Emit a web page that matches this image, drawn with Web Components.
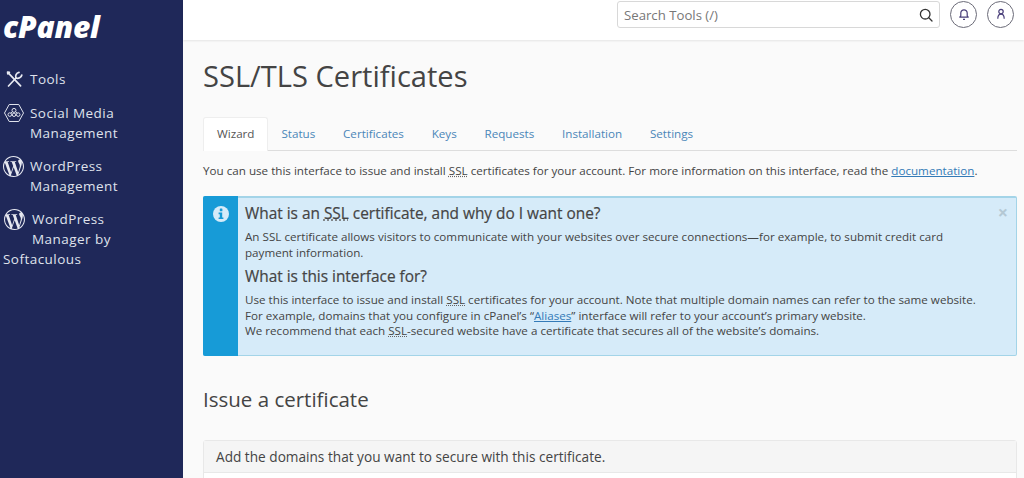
<!DOCTYPE html>
<html lang="en">
<head>
<meta charset="utf-8">
<title>SSL/TLS Certificates</title>
<style>
    html, body { margin: 0; height: 478px; overflow: hidden; }
    body { font-family: "Open Sans", sans-serif; color: #444; background: #fafafa; }
    #page { display: flex; height: 478px; }
    #right { flex: 1; min-width: 0; display: flex; flex-direction: column; }
</style>
</head>
<body>
<div id="page">
    <cp-sidebar>
        <cp-nav-item icon="tools" label="Tools"></cp-nav-item>
        <cp-nav-item icon="social" label="Social Media Management"></cp-nav-item>
        <cp-nav-item icon="wp" label="WordPress Management"></cp-nav-item>
        <cp-nav-item icon="wp" label="WordPress Manager by Softaculous" variant="wrap"></cp-nav-item>
    </cp-sidebar>
    <div id="right">
        <cp-topbar></cp-topbar>
        <cp-content>
            <cp-tabs></cp-tabs>
            <cp-intro></cp-intro>
            <cp-alert></cp-alert>
            <cp-issue></cp-issue>
        </cp-content>
    </div>
</div>

<script>
(function () {
    const ICONS = {
        tools: `<svg width="20" height="18" viewBox="0 0 20 18" fill="none" stroke="#e8eaf2" stroke-width="1.7" stroke-linecap="round" stroke-linejoin="round">
            <path d="M5.5 16 L13 8"/>
            <path d="M13 8 C12 5.6 13.2 3 16 2.4 M13 8 C15.4 9 18.4 7.6 18.8 5"/>
            <path d="M5 2.6 L17.6 15.8"/>
            <path d="M4.6 2.2 L6.4 2.4 M4.6 2.2 L4.8 4"/></svg>`,
        social: `<svg width="22" height="20" viewBox="0 0 22 20" fill="none" stroke="#dfe2ec" stroke-width="1" stroke-linejoin="round">
            <path d="M6.2 1.5 H15.8 L20.5 10 L15.8 18.5 H6.2 L1.5 10 Z"/>
            <circle cx="11" cy="7.4" r="2"/><circle cx="6.8" cy="11.6" r="1.8"/><circle cx="15.2" cy="11.6" r="1.8"/><circle cx="11" cy="11.8" r="1.7"/>
            <path d="M8.6 11.7 H9.3 M12.7 11.7 H13.4 M9.4 8.8 L7.8 10.2 M12.6 8.8 L14.2 10.2"/></svg>`,
        wp: `<svg width="21" height="21" viewBox="0 0 24 24" fill="#e6e8f0"><path d="M21.469 6.825c.84 1.537 1.318 3.3 1.318 5.175 0 3.979-2.156 7.456-5.363 9.325l3.295-9.527c.615-1.54.82-2.771.82-3.864 0-.405-.026-.78-.07-1.11m-7.981.105c.647-.03 1.232-.105 1.232-.105.582-.075.514-.93-.067-.899 0 0-1.755.135-2.88.135-1.064 0-2.85-.15-2.85-.15-.585-.03-.661.855-.075.885 0 0 .54.061 1.125.09l1.68 4.605-2.37 7.08L5.354 6.9c.649-.03 1.234-.1 1.234-.1.585-.075.516-.93-.065-.896 0 0-1.746.138-2.874.138-.2 0-.438-.008-.69-.015C4.911 3.15 8.235 1.215 12 1.215c2.809 0 5.365 1.072 7.286 2.833-.046-.003-.091-.009-.141-.009-1.06 0-1.812.923-1.812 1.914 0 .89.513 1.643 1.06 2.531.411.72.89 1.643.89 2.977 0 .915-.354 2-.821 3.479l-1.075 3.585-3.9-11.61.001.014zM12 22.784c-1.059 0-2.081-.153-3.048-.437l3.237-9.406 3.315 9.087c.024.053.05.101.078.149-1.12.393-2.325.609-3.582.609M1.211 12c0-1.564.336-3.05.935-4.39L7.29 21.709C3.694 19.96 1.212 16.271 1.211 12M12 0C5.385 0 0 5.385 0 12s5.385 12 12 12 12-5.385 12-12S18.615 0 12 0"/></svg>`
    };

    const $sidebar = document.createElement('template');
    $sidebar.innerHTML = `
    <style>
        :host { display: block; width: 183px; flex: none; height: 478px; background: #1f2859; color: #dfe2ec; }
        .logo { padding: 6px 0 0 3px; height: 54px; font: italic 800 30px/41px "Open Sans", sans-serif; letter-spacing: -.2px; color: #fff; }
        .items { display: flex; flex-direction: column; gap: 13px; padding-top: 9px; }
        ::slotted(:first-child) { margin-bottom: 1px; }
    </style>
    <div class="logo">cPanel</div>
    <div class="items"><slot></slot></div>
    `;
    class CpSidebar extends HTMLElement {
        constructor() {
            super();
            this.attachShadow({ mode: 'open' });
            this.shadowRoot.appendChild($sidebar.content.cloneNode(true));
        }
    }
    customElements.define('cp-sidebar', CpSidebar);

    const $nav = document.createElement('template');
    $nav.innerHTML = `
    <style>
        :host { display: block; font-size: 13.5px; line-height: 20px; letter-spacing: .45px; color: #dfe2ec; }
        .row { display: flex; padding-left: 3px; }
        .icon { flex: none; width: 27px; height: 20px; display: flex; align-items: center; }
        .wrap { padding-left: 3px; }
        .wrap .icon { display: inline-flex; vertical-align: top; width: 28px; margin-left: 1px; }
        .label { min-width: 0; width: 100px; }
    </style>
    <div class="box"></div>
    `;
    class CpNavItem extends HTMLElement {
        constructor() {
            super();
            this.attachShadow({ mode: 'open' });
            this.shadowRoot.appendChild($nav.content.cloneNode(true));
        }
        connectedCallback() {
            const $box = this.shadowRoot.querySelector('.box');
            const icon = ICONS[this.getAttribute('icon')];
            const label = this.getAttribute('label');
            if (this.getAttribute('variant') === 'wrap') {
                // the last item really does run back under its icon
                $box.className = 'wrap';
                $box.innerHTML = `<span class="icon">${icon}</span>WordPress<br><span style="margin-left:29px">Manager by</span><br>Softaculous`;
            } else {
                $box.className = 'row';
                $box.innerHTML = `<span class="icon">${icon}</span><span class="label">${label}</span>`;
            }
        }
    }
    customElements.define('cp-nav-item', CpNavItem);

    const $topbar = document.createElement('template');
    $topbar.innerHTML = `
    <style>
        :host { display: flex; align-items: flex-start; justify-content: flex-end; flex: none; height: 40px; box-sizing: border-box; padding: 1px 10px 0 0; gap: 10px; background: #fff; box-shadow: 0 1px 2px rgba(0,0,0,.09); position: relative; }
        .search { width: 323px; height: 27px; box-sizing: border-box; display: flex; align-items: center; justify-content: space-between; padding: 0 6px; border: 1px solid #d8d8d8; border-radius: 3px; font-size: 13.2px; color: #777; }
        .round { width: 27px; height: 27px; box-sizing: border-box; border: 1px solid #6b6b78; border-radius: 50%; display: flex; align-items: center; justify-content: center; }
    </style>
    <div class="search">
        <span>Search Tools (/)</span>
        <svg width="14" height="14" viewBox="0 0 14 14" fill="none" stroke="#333" stroke-width="1.3" stroke-linecap="round"><circle cx="6.2" cy="6.2" r="4.8"/><path d="M9.8 9.8 L13 13"/></svg>
    </div>
    <div class="round">
        <svg width="12" height="13" viewBox="0 0 12 13" fill="none" stroke="#4a3f7a" stroke-width="1.2" stroke-linejoin="round"><path d="M1.8 9.2 H10.2 L9.2 7.8 V5 A3.2 3.2 0 0 0 2.8 5 V7.8 Z"/><path d="M5 11.4 H7"/></svg>
    </div>
    <div class="round">
        <svg width="12" height="13" viewBox="0 0 12 13" fill="none" stroke="#4a3f7a" stroke-width="1.2" stroke-linejoin="round"><circle cx="6" cy="3.6" r="2.2"/><path d="M2.8 10.8 C2.8 8.2 4.2 6.2 6 6.2 C7.8 6.2 9.2 8.2 9.2 10.8"/></svg>
    </div>
    `;
    class CpTopbar extends HTMLElement {
        constructor() {
            super();
            this.attachShadow({ mode: 'open' });
            this.shadowRoot.appendChild($topbar.content.cloneNode(true));
        }
    }
    customElements.define('cp-topbar', CpTopbar);

    const $content = document.createElement('template');
    $content.innerHTML = `
    <style>
        :host { display: block; flex: 1; min-height: 0; overflow: hidden; padding: 0 7px 0 20px; }
        h1 { margin: 0 0 20px; padding-top: 16px; font-size: 29.1px; font-weight: 400; line-height: 41px; color: #444; }
    </style>
    <h1>SSL/TLS Certificates</h1>
    <slot></slot>
    `;
    class CpContent extends HTMLElement {
        constructor() {
            super();
            this.attachShadow({ mode: 'open' });
            this.shadowRoot.appendChild($content.content.cloneNode(true));
        }
    }
    customElements.define('cp-content', CpContent);

    const $tabs = document.createElement('template');
    $tabs.innerHTML = `
    <style>
        :host { display: flex; height: 34px; box-sizing: border-box; border-bottom: 1px solid #ddd; font-size: 11.65px; line-height: 17px; }
        a { display: block; padding: 8px 13.9px 0; color: #4a86b8; text-decoration: none; height: 34px; box-sizing: border-box; }
        a.on { color: #555; background: #fff; border: 1px solid #eee; border-bottom: 0; border-radius: 3px 3px 0 0; padding: 7px 12px 0 13px; }
    </style>
    <a class="on">Wizard</a><a>Status</a><a>Certificates</a><a>Keys</a><a>Requests</a><a>Installation</a><a>Settings</a>
    `;
    class CpTabs extends HTMLElement {
        constructor() {
            super();
            this.attachShadow({ mode: 'open' });
            this.shadowRoot.appendChild($tabs.content.cloneNode(true));
        }
    }
    customElements.define('cp-tabs', CpTabs);

    const $intro = document.createElement('template');
    $intro.innerHTML = `
    <style>
        :host { display: block; font-size: 11.65px; line-height: 17px; padding-top: 11px; color: #444; white-space: nowrap; }
        abbr { text-decoration: underline dotted #666; }
        a { color: #337ab7; text-decoration: underline; }
    </style>
    You can use this interface to issue and install <abbr>SSL</abbr> certificates for your account. For more information on this interface, read the <a>documentation</a>.
    `;
    class CpIntro extends HTMLElement {
        constructor() {
            super();
            this.attachShadow({ mode: 'open' });
            this.shadowRoot.appendChild($intro.content.cloneNode(true));
        }
    }
    customElements.define('cp-intro', CpIntro);

    const $alert = document.createElement('template');
    $alert.innerHTML = `
    <style>
        :host { display: flex; position: relative; height: 160px; box-sizing: border-box; margin-top: 17px; background: #d6ebf9; border: 1px solid #a3d4e8; border-top-width: 2px; border-radius: 2px; color: #444; font-size: 11.65px; line-height: 15.5px; }
        .side { flex: none; width: 35px; margin: -2px 0 -1px -1px; background: #179bd7; border-radius: 2px 0 0 2px; display: flex; justify-content: center; padding-top: 9px; }
        .side svg { display: block; }
        .body { padding: 6px 12px 0 7px; flex: 1; min-width: 0; }
        h3 { margin: 0; font-size: 15.4px; line-height: 20px; font-weight: 400; color: #444; -webkit-text-stroke: .2px #444; }
        p { margin: 0; }
        h3 + p { margin-top: 5px; }
        p + h3 { margin-top: 7px; }
        abbr { text-decoration: underline dotted #666; }
        a { color: #337ab7; text-decoration: underline; }
        .close { position: absolute; top: 6px; right: 8px; font-size: 18px; line-height: 16px; color: #b4c8d4; font-weight: 700; }
    </style>
    <div class="side">
        <svg width="18" height="18" viewBox="0 0 18 18"><circle cx="9" cy="9" r="8" fill="#d6ebf9"/><rect x="7.8" y="3.6" width="2.6" height="2.6" rx=".5" fill="#179bd7"/><path d="M6.6 7.6 H10.2 V12.4 H11.4 V14 H6.6 V12.4 H7.8 V9.2 H6.6 Z" fill="#179bd7"/></svg>
    </div>
    <div class="body">
        <h3>What is an <abbr>SSL</abbr> certificate, and why do I want one?</h3>
        <p>An SSL certificate allows visitors to communicate with your websites over secure connections—for example, to submit credit card<br>payment information.</p>
        <h3>What is this interface for?</h3>
        <p>Use this interface to issue and install <abbr>SSL</abbr> certificates for your account. Note that multiple domain names can refer to the same website.<br>
        For example, domains that you configure in cPanel’s “<a>Aliases</a>” interface will refer to your account’s primary website.<br>
        We recommend that each <abbr>SSL</abbr>-secured website have a certificate that secures all of the website’s domains.</p>
    </div>
    <span class="close">×</span>
    `;
    class CpAlert extends HTMLElement {
        constructor() {
            super();
            this.attachShadow({ mode: 'open' });
            this.shadowRoot.appendChild($alert.content.cloneNode(true));
        }
    }
    customElements.define('cp-alert', CpAlert);

    const $issue = document.createElement('template');
    $issue.innerHTML = `
    <style>
        :host { display: block; }
        h2 { margin: 0; padding-top: 30px; font-size: 20.5px; line-height: 27px; font-weight: 400; color: #444; }
        .card { margin-top: 27px; border: 1px solid #e8e8e8; border-radius: 3px; background: #fff; height: 60px; }
        .head { height: 32px; box-sizing: border-box; padding: 7px 12px 0; font-size: 13.65px; line-height: 18px; background: #f5f5f5; border-bottom: 1px solid #e8e8e8; color: #444; }
    </style>
    <h2>Issue a certificate</h2>
    <div class="card"><div class="head">Add the domains that you want to secure with this certificate.</div></div>
    `;
    class CpIssue extends HTMLElement {
        constructor() {
            super();
            this.attachShadow({ mode: 'open' });
            this.shadowRoot.appendChild($issue.content.cloneNode(true));
        }
    }
    customElements.define('cp-issue', CpIssue);
})();
</script>
</body>
</html>
